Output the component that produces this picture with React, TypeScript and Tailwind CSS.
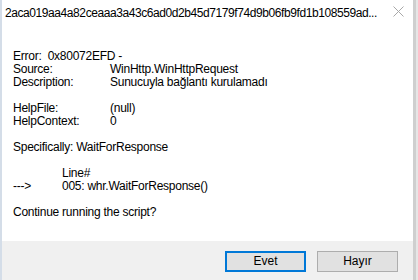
import React from "react";

// Windows Script Host error dialog (cut off at the top)

const font = { fontFamily: '"Liberation Sans", Arial, sans-serif' };

const Row = ({ label, value }: { label: string; value: string }) => (
  <div className="flex">
    <span className="w-[97px] shrink-0">{label}</span>
    <span>{value}</span>
  </div>
);

const Button = ({ label, primary }: { label: string; primary?: boolean }) => (
  <button
    className={
      "flex h-[21px] w-[81px] items-center justify-center bg-[#e1e1e1] text-[12px] leading-[13px] text-black " +
      (primary ? "border-2 border-[#0078d7]" : "border border-[#adadad]")
    }
  >
    {label}
  </button>
);

export default function App() {
  return (
    <div className="flex h-[280px] w-[418px] overflow-hidden bg-[#f3f3f3]" style={font}>
      {/* sliver of the window behind */}
      <div className="w-[2px] shrink-0 bg-[#d4dde8]" />

      <div className="flex w-[411px] shrink-0 flex-col bg-white">
        {/* title bar */}
        <div className="relative h-[30px] shrink-0">
          <div className="pl-[3px] pt-[5px] text-[12px] leading-[16px] tracking-[-0.42px] text-black whitespace-nowrap">
            2aca019aa4a82ceaaa3a43c6ad0d2b45d7179f74d9b06fb9fd1b108559ad...
          </div>
          <svg
            className="absolute left-[391px] top-[6px]"
            width="11"
            height="11"
            viewBox="0 0 11 11"
          >
            <path d="M0.5 0.5 L10.5 10.5 M10.5 0.5 L0.5 10.5" stroke="#a8a8a8" strokeWidth="1" />
          </svg>
        </div>

        {/* message body */}
        <div className="flex-1 pl-[11px] pt-[20px] text-[12px] leading-[13px] tracking-[-0.25px] text-black">
          <div className="whitespace-pre">Error:  0x80072EFD -</div>
          <Row label="Source:" value="WinHttp.WinHttpRequest" />
          <Row label="Description:" value="Sunucuyla bağlantı kurulamadı" />
          <div className="h-[13px]" />
          <Row label="HelpFile:" value="(null)" />
          <Row label="HelpContext:" value="0" />
          <div className="h-[13px]" />
          <div>Specifically: WaitForResponse</div>
          <div className="h-[13px]" />
          <div className="flex">
            <span className="w-[49px] shrink-0" />
            <span>Line#</span>
          </div>
          <div className="flex">
            <span className="w-[49px] shrink-0">---&gt;</span>
            <span>005: whr.WaitForResponse()</span>
          </div>
          <div className="h-[13px]" />
          <div>Continue running the script?</div>
        </div>

        {/* buttons */}
        <div className="flex h-[39px] shrink-0 justify-end gap-[11px] bg-[#f0f0f0] pr-[15px] pt-[10px]">
          <Button label="Evet" primary />
          <Button label="Hayır" />
        </div>
      </div>

      {/* window shadow edge */}
      <div className="w-[3px] shrink-0 bg-[#cfcfcf]" />
      <div className="w-[2px] shrink-0 bg-[#e6e6e6]" />
    </div>
  );
}
